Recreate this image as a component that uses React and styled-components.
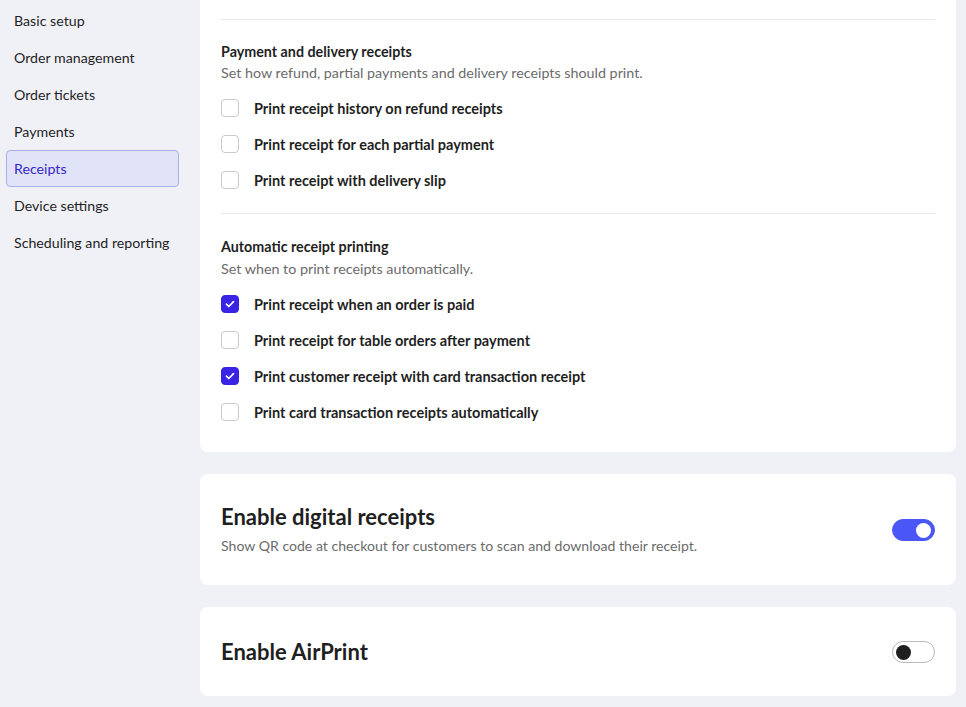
import React, { useState } from 'react'
import styled, { createGlobalStyle } from 'styled-components'

const colors = {
  page: '#f0f1f7',
  white: '#ffffff',
  text: '#1f1f1f',
  muted: '#6b6b6b',
  line: '#e8e9ef',
  brand: '#3a24e4',
  toggle: '#4a57f6',
  activeBg: '#e1e4f8',
  activeBorder: '#aab0ea',
  activeText: '#3527c7',
}

const GlobalStyle = createGlobalStyle`
  html, body {
    margin: 0;
    padding: 0;
    background: ${colors.page};
    font-family: Lato, "Noto Sans", sans-serif;
    color: ${colors.text};
    -webkit-font-smoothing: antialiased;
  }
  * { box-sizing: border-box; }
`

const sections = [
  'Basic setup',
  'Order management',
  'Order tickets',
  'Payments',
  'Receipts',
  'Device settings',
  'Scheduling and reporting',
]

const printGroups = [
  {
    title: 'Payment and delivery receipts',
    hint: 'Set how refund, partial payments and delivery receipts should print.',
    options: [
      { id: 'refundHistory', label: 'Print receipt history on refund receipts', on: false },
      { id: 'partial', label: 'Print receipt for each partial payment', on: false },
      { id: 'delivery', label: 'Print receipt with delivery slip', on: false },
    ],
  },
  {
    title: 'Automatic receipt printing',
    hint: 'Set when to print receipts automatically.',
    options: [
      { id: 'paid', label: 'Print receipt when an order is paid', on: true },
      { id: 'table', label: 'Print receipt for table orders after payment', on: false },
      { id: 'cardCustomer', label: 'Print customer receipt with card transaction receipt', on: true },
      { id: 'cardAuto', label: 'Print card transaction receipts automatically', on: false },
    ],
  },
]

const initialChecks = printGroups
  .flatMap(g => g.options)
  .reduce((acc, o) => ({ ...acc, [o.id]: o.on }), {})

function Checkbox({ checked, onChange, label }) {
  return (
    <OptionRow onClick={onChange}>
      <Box $checked={checked}>
        {checked && (
          <svg width="12" height="12" viewBox="0 0 12 12" fill="none">
            <path d="M2.5 6.2l2.3 2.3 4.7-4.9" stroke="#fff" strokeWidth="1.7" strokeLinecap="round" strokeLinejoin="round" />
          </svg>
        )}
      </Box>
      <OptionLabel>{label}</OptionLabel>
    </OptionRow>
  )
}

function Toggle({ on, onChange }) {
  return (
    <Switch $on={on} onClick={onChange}>
      <Knob $on={on} />
    </Switch>
  )
}

export default function App() {
  const [checks, setChecks] = useState(initialChecks)
  const [digital, setDigital] = useState(true)
  const [airPrint, setAirPrint] = useState(false)

  const flip = id => setChecks(c => ({ ...c, [id]: !c[id] }))

  return (
    <Page>
      <GlobalStyle />
      <Sidebar>
        {sections.map(name => (
          <NavItem key={name} $active={name === 'Receipts'}>{name}</NavItem>
        ))}
      </Sidebar>

      <Main>
        <Card $continued>
          {printGroups.map(group => (
            <Group key={group.title}>
              <GroupTitle>{group.title}</GroupTitle>
              <GroupHint>{group.hint}</GroupHint>
              <Options>
                {group.options.map(o => (
                  <Checkbox key={o.id} label={o.label} checked={checks[o.id]} onChange={() => flip(o.id)} />
                ))}
              </Options>
            </Group>
          ))}
        </Card>

        <ToggleCard>
          <div>
            <CardTitle>Enable digital receipts</CardTitle>
            <CardHint>Show QR code at checkout for customers to scan and download their receipt.</CardHint>
          </div>
          <Toggle on={digital} onChange={() => setDigital(!digital)} />
        </ToggleCard>

        <ToggleCard>
          <div>
            <CardTitle>Enable AirPrint</CardTitle>
          </div>
          <Toggle on={airPrint} onChange={() => setAirPrint(!airPrint)} />
        </ToggleCard>
      </Main>
    </Page>
  )
}

const Page = styled.div`
  display: flex;
  align-items: flex-start;
  min-height: 707px;
  padding-right: 10px;
`

const Sidebar = styled.nav`
  width: 200px;
  flex-shrink: 0;
  padding: 2px 21px 0 6px;
  display: flex;
  flex-direction: column;
`

const NavItem = styled.div`
  height: 37px;
  display: flex;
  align-items: center;
  padding: 0 7px;
  font-size: 14.2px;
  color: ${p => (p.$active ? colors.activeText : colors.text)};
  background: ${p => (p.$active ? colors.activeBg : 'transparent')};
  border: 1px solid ${p => (p.$active ? colors.activeBorder : 'transparent')};
  border-radius: 4px;
  cursor: pointer;
`

const Main = styled.main`
  flex: 1;
  display: flex;
  flex-direction: column;
  gap: 22px;
  padding-bottom: 10px;
`

const Card = styled.section`
  background: ${colors.white};
  border-radius: ${p => (p.$continued ? '0 0 8px 8px' : '8px')};
  padding: 0 21px 22px;
`

const Group = styled.div`
  border-top: 1px solid ${colors.line};
  padding-top: 22px;
  &:first-child { margin-top: 19px; }
  & + & {
    margin-top: 15px;
    padding-top: 23px;
  }
`

const GroupTitle = styled.h3`
  margin: 0;
  font-size: 14.3px;
  line-height: 20px;
  font-weight: 700;
`

const GroupHint = styled.p`
  margin: 0;
  font-size: 14.3px;
  line-height: 22px;
  color: ${colors.muted};
  ${Group} + ${Group} & { margin-top: 1px; }
`

const Options = styled.div`
  margin-top: 6px;
  display: flex;
  flex-direction: column;
`

const OptionRow = styled.label`
  height: 36px;
  display: flex;
  align-items: center;
  gap: 15px;
  cursor: pointer;
`

const Box = styled.span`
  width: 18px;
  height: 18px;
  flex-shrink: 0;
  border-radius: 4px;
  display: flex;
  align-items: center;
  justify-content: center;
  background: ${p => (p.$checked ? colors.brand : colors.white)};
  border: 1px solid ${p => (p.$checked ? colors.brand : '#c9c9cf')};
`

const OptionLabel = styled.span`
  font-size: 14.5px;
  font-weight: 700;
  color: ${colors.text};
`

const ToggleCard = styled.section`
  background: ${colors.white};
  border-radius: 8px;
  min-height: 89px;
  padding: 29px 21px 28px;
  display: flex;
  align-items: center;
  justify-content: space-between;
`

const CardTitle = styled.h2`
  margin: 0;
  font-size: 22px;
  line-height: 28px;
  font-weight: 700;
`

const CardHint = styled.p`
  margin: 4px 0 0;
  font-size: 14.1px;
  line-height: 22px;
  color: ${colors.muted};
`

const Switch = styled.button`
  width: 43px;
  height: 22px;
  flex-shrink: 0;
  padding: 0 3px;
  border-radius: 11px;
  display: flex;
  align-items: center;
  justify-content: ${p => (p.$on ? 'flex-end' : 'flex-start')};
  background: ${p => (p.$on ? colors.toggle : colors.white)};
  border: 1px solid ${p => (p.$on ? colors.toggle : '#b9b9be')};
  cursor: pointer;
`

const Knob = styled.span`
  width: 15px;
  height: 15px;
  border-radius: 50%;
  background: ${p => (p.$on ? colors.white : '#1f1f1f')};
`
